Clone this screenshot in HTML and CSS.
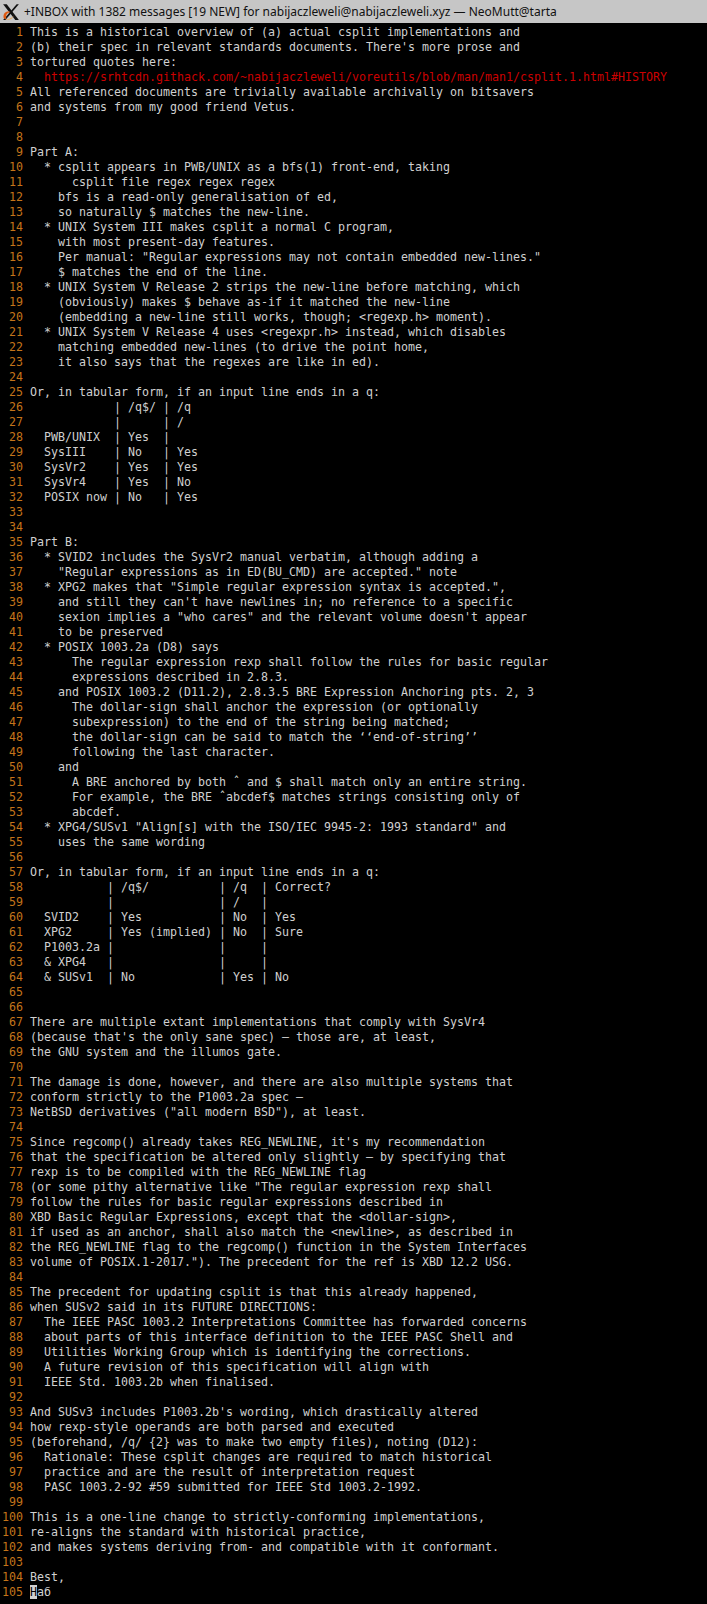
FILE: index.html
```html
<!DOCTYPE html>
<html>
<head>
<meta charset="utf-8">
<link rel="stylesheet" href="styles.css">
</head>
<body>
<div class="titlebar">
<svg class="xlogo" width="18" height="18" viewBox="0 0 16 16">
<path d="M1 1 L4.2 1 L15 15 L11.8 15 Z" fill="#111"/>
<path d="M13 1 L15 1 L3 15 L1 15 Z" fill="#111"/>
<path d="M1.5 13.5 C0.5 9 4 6.5 7.5 8 C4 9 3 11 4 14.5 Z" fill="#e05a10"/>
<path d="M3 14.5 C6 15.5 9.5 14 10.5 11 C9 13.5 6 14.5 3 14.5 Z" fill="#f0a040"/>
</svg>
<span class="title">+INBOX with 1382 messages [19 NEW] for nabijaczleweli@nabijaczleweli.xyz — NeoMutt@tarta</span>
</div>
<pre class="pager"><span class="ln">  1</span> This is a historical overview of (a) actual csplit implementations and
<span class="ln">  2</span> (b) their spec in relevant standards documents. There's more prose and
<span class="ln">  3</span> tortured quotes here:
<span class="ln">  4</span>   <span class="url">https://srhtcdn.githack.com/~nabijaczleweli/voreutils/blob/man/man1/csplit.1.html#HISTORY</span>
<span class="ln">  5</span> All referenced documents are trivially available archivally on bitsavers
<span class="ln">  6</span> and systems from my good friend Vetus.
<span class="ln">  7</span>
<span class="ln">  8</span>
<span class="ln">  9</span> Part A:
<span class="ln"> 10</span>   * csplit appears in PWB/UNIX as a bfs(1) front-end, taking
<span class="ln"> 11</span>       csplit file regex regex regex
<span class="ln"> 12</span>     bfs is a read-only generalisation of ed,
<span class="ln"> 13</span>     so naturally $ matches the new-line.
<span class="ln"> 14</span>   * UNIX System III makes csplit a normal C program,
<span class="ln"> 15</span>     with most present-day features.
<span class="ln"> 16</span>     Per manual: "Regular expressions may not contain embedded new-lines."
<span class="ln"> 17</span>     $ matches the end of the line.
<span class="ln"> 18</span>   * UNIX System V Release 2 strips the new-line before matching, which
<span class="ln"> 19</span>     (obviously) makes $ behave as-if it matched the new-line
<span class="ln"> 20</span>     (embedding a new-line still works, though; &lt;regexp.h&gt; moment).
<span class="ln"> 21</span>   * UNIX System V Release 4 uses &lt;regexpr.h&gt; instead, which disables
<span class="ln"> 22</span>     matching embedded new-lines (to drive the point home,
<span class="ln"> 23</span>     it also says that the regexes are like in ed).
<span class="ln"> 24</span>
<span class="ln"> 25</span> Or, in tabular form, if an input line ends in a q:
<span class="ln"> 26</span>             | /q$/ | /q
<span class="ln"> 27</span>             |      | /
<span class="ln"> 28</span>   PWB/UNIX  | Yes  |
<span class="ln"> 29</span>   SysIII    | No   | Yes
<span class="ln"> 30</span>   SysVr2    | Yes  | Yes
<span class="ln"> 31</span>   SysVr4    | Yes  | No
<span class="ln"> 32</span>   POSIX now | No   | Yes
<span class="ln"> 33</span>
<span class="ln"> 34</span>
<span class="ln"> 35</span> Part B:
<span class="ln"> 36</span>   * SVID2 includes the SysVr2 manual verbatim, although adding a
<span class="ln"> 37</span>     "Regular expressions as in ED(BU_CMD) are accepted." note
<span class="ln"> 38</span>   * XPG2 makes that "Simple regular expression syntax is accepted.",
<span class="ln"> 39</span>     and still they can't have newlines in; no reference to a specific
<span class="ln"> 40</span>     sexion implies a "who cares" and the relevant volume doesn't appear
<span class="ln"> 41</span>     to be preserved
<span class="ln"> 42</span>   * POSIX 1003.2a (D8) says
<span class="ln"> 43</span>       The regular expression rexp shall follow the rules for basic regular
<span class="ln"> 44</span>       expressions described in 2.8.3.
<span class="ln"> 45</span>     and POSIX 1003.2 (D11.2), 2.8.3.5 BRE Expression Anchoring pts. 2, 3
<span class="ln"> 46</span>       The dollar-sign shall anchor the expression (or optionally
<span class="ln"> 47</span>       subexpression) to the end of the string being matched;
<span class="ln"> 48</span>       the dollar-sign can be said to match the ‘‘end-of-string’’
<span class="ln"> 49</span>       following the last character.
<span class="ln"> 50</span>     and
<span class="ln"> 51</span>       A BRE anchored by both ˆ and $ shall match only an entire string.
<span class="ln"> 52</span>       For example, the BRE ˆabcdef$ matches strings consisting only of
<span class="ln"> 53</span>       abcdef.
<span class="ln"> 54</span>   * XPG4/SUSv1 "Align[s] with the ISO/IEC 9945-2: 1993 standard" and
<span class="ln"> 55</span>     uses the same wording
<span class="ln"> 56</span>
<span class="ln"> 57</span> Or, in tabular form, if an input line ends in a q:
<span class="ln"> 58</span>            | /q$/          | /q  | Correct?
<span class="ln"> 59</span>            |               | /   |
<span class="ln"> 60</span>   SVID2    | Yes           | No  | Yes
<span class="ln"> 61</span>   XPG2     | Yes (implied) | No  | Sure
<span class="ln"> 62</span>   P1003.2a |               |     |
<span class="ln"> 63</span>   &amp; XPG4   |               |     |
<span class="ln"> 64</span>   &amp; SUSv1  | No            | Yes | No
<span class="ln"> 65</span>
<span class="ln"> 66</span>
<span class="ln"> 67</span> There are multiple extant implementations that comply with SysVr4
<span class="ln"> 68</span> (because that's the only sane spec) — those are, at least,
<span class="ln"> 69</span> the GNU system and the illumos gate.
<span class="ln"> 70</span>
<span class="ln"> 71</span> The damage is done, however, and there are also multiple systems that
<span class="ln"> 72</span> conform strictly to the P1003.2a spec —
<span class="ln"> 73</span> NetBSD derivatives ("all modern BSD"), at least.
<span class="ln"> 74</span>
<span class="ln"> 75</span> Since regcomp() already takes REG_NEWLINE, it's my recommendation
<span class="ln"> 76</span> that the specification be altered only slightly — by specifying that
<span class="ln"> 77</span> rexp is to be compiled with the REG_NEWLINE flag
<span class="ln"> 78</span> (or some pithy alternative like "The regular expression rexp shall
<span class="ln"> 79</span> follow the rules for basic regular expressions described in
<span class="ln"> 80</span> XBD Basic Regular Expressions, except that the &lt;dollar-sign&gt;,
<span class="ln"> 81</span> if used as an anchor, shall also match the &lt;newline&gt;, as described in
<span class="ln"> 82</span> the REG_NEWLINE flag to the regcomp() function in the System Interfaces
<span class="ln"> 83</span> volume of POSIX.1-2017."). The precedent for the ref is XBD 12.2 USG.
<span class="ln"> 84</span>
<span class="ln"> 85</span> The precedent for updating csplit is that this already happened,
<span class="ln"> 86</span> when SUSv2 said in its FUTURE DIRECTIONS:
<span class="ln"> 87</span>   The IEEE PASC 1003.2 Interpretations Committee has forwarded concerns
<span class="ln"> 88</span>   about parts of this interface definition to the IEEE PASC Shell and
<span class="ln"> 89</span>   Utilities Working Group which is identifying the corrections.
<span class="ln"> 90</span>   A future revision of this specification will align with
<span class="ln"> 91</span>   IEEE Std. 1003.2b when finalised.
<span class="ln"> 92</span>
<span class="ln"> 93</span> And SUSv3 includes P1003.2b's wording, which drastically altered
<span class="ln"> 94</span> how rexp-style operands are both parsed and executed
<span class="ln"> 95</span> (beforehand, /q/ {2} was to make two empty files), noting (D12):
<span class="ln"> 96</span>   Rationale: These csplit changes are required to match historical
<span class="ln"> 97</span>   practice and are the result of interpretation request
<span class="ln"> 98</span>   PASC 1003.2-92 #59 submitted for IEEE Std 1003.2-1992.
<span class="ln"> 99</span>
<span class="ln">100</span> This is a one-line change to strictly-conforming implementations,
<span class="ln">101</span> re-aligns the standard with historical practice,
<span class="ln">102</span> and makes systems deriving from- and compatible with it conformant.
<span class="ln">103</span>
<span class="ln">104</span> Best,
<span class="ln">105</span> <span class="cursor">Н</span>аб</pre>
</body>
</html>
```
FILE: styles.css
```css
html, body {
  margin: 0;
  padding: 0;
  background: #000;
}
.titlebar {
  height: 23px;
  background: #c6c6c6;
  display: flex;
  align-items: center;
  padding-left: 2px;
  gap: 4px;
}
.xlogo {
  flex: none;
}
.title {
  font-family: "Noto Sans", "Open Sans", sans-serif;
  font-size: 12px;
  color: #111;
  white-space: nowrap;
}
.pager {
  margin: 0;
  padding: 2px 0 0 2px;
  font-family: "DejaVu Sans Mono", monospace;
  font-size: 11.63px;
  line-height: 15px;
  color: #d0d0d0;
  white-space: pre;
}
.ln {
  color: #c4741a;
}
.url {
  color: #cc0000;
}
.cursor {
  background: #d0d0d0;
  color: #000;
}
```
